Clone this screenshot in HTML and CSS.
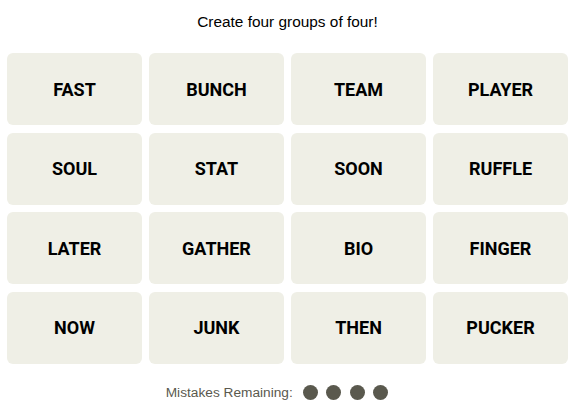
FILE: index.html
```html
<!DOCTYPE html>
<html>
<head>
<meta charset="utf-8">
<link rel="stylesheet" href="styles.css">
</head>
<body>
<main class="game">
  <p class="prompt">Create four groups of four!</p>
  <section class="board">
    <div class="tile">FAST</div>
    <div class="tile">BUNCH</div>
    <div class="tile">TEAM</div>
    <div class="tile">PLAYER</div>
    <div class="tile">SOUL</div>
    <div class="tile">STAT</div>
    <div class="tile">SOON</div>
    <div class="tile">RUFFLE</div>
    <div class="tile">LATER</div>
    <div class="tile">GATHER</div>
    <div class="tile">BIO</div>
    <div class="tile">FINGER</div>
    <div class="tile">NOW</div>
    <div class="tile">JUNK</div>
    <div class="tile">THEN</div>
    <div class="tile">PUCKER</div>
  </section>
  <div class="mistakes">
    <span class="label">Mistakes Remaining:</span>
    <span class="dots">
      <span class="dot"></span><span class="dot"></span><span class="dot"></span><span class="dot"></span>
    </span>
  </div>
</main>
</body>
</html>
```
FILE: styles.css
```css
html, body {
  margin: 0;
  padding: 0;
  background: #fff;
}
.game {
  font-family: "Liberation Sans", Arial, sans-serif;
  color: #000;
  padding: 0 6px 0 7px;
}
.prompt {
  margin: 0;
  padding-top: 13px;
  height: 40px;
  box-sizing: border-box;
  font-size: 15.4px;
  line-height: 18px;
  text-align: center;
}
.board {
  display: grid;
  grid-template-columns: repeat(4, 135px);
  grid-auto-rows: 72px;
  column-gap: 7px;
  row-gap: 7.5px;
  margin-top: 13px;
}
.tile {
  background: #efefe6;
  border-radius: 6px;
  display: flex;
  align-items: center;
  justify-content: center;
  font-family: Roboto, "Liberation Sans", sans-serif;
  font-weight: 700;
  font-size: 18px;
  text-transform: uppercase;
}
.mistakes {
  display: flex;
  justify-content: center;
  align-items: center;
  gap: 10px;
  margin-top: 21px;
  height: 16px;
  padding-right: 21px;
}
.label {
  font-size: 13.7px;
  color: #5a594e;
}
.dots {
  display: flex;
  gap: 8.5px;
}
.dot {
  width: 15px;
  height: 15px;
  border-radius: 50%;
  background: #5a594e;
}
```
